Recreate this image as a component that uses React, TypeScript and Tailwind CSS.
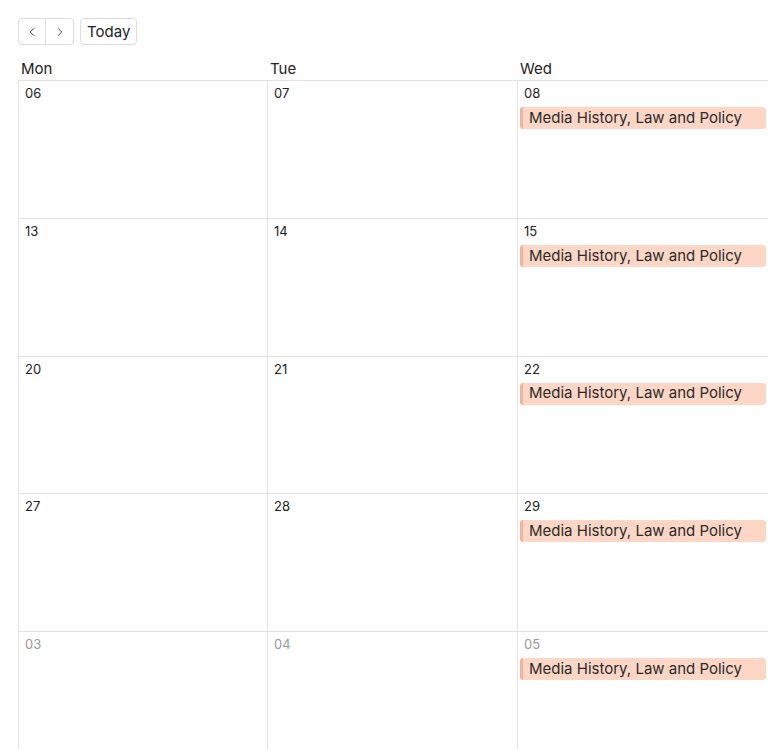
import { ChevronLeft, ChevronRight } from 'lucide-react';

type Day = { label: string; muted?: boolean; event?: string };

const DAYS = ['Mon', 'Tue', 'Wed'];

const WEEKS: Day[][] = [
  [{ label: '06' }, { label: '07' }, { label: '08', event: 'Media History, Law and Policy' }],
  [{ label: '13' }, { label: '14' }, { label: '15', event: 'Media History, Law and Policy' }],
  [{ label: '20' }, { label: '21' }, { label: '22', event: 'Media History, Law and Policy' }],
  [{ label: '27' }, { label: '28' }, { label: '29', event: 'Media History, Law and Policy' }],
  [
    { label: '03', muted: true },
    { label: '04', muted: true },
    { label: '05', muted: true, event: 'Media History, Law and Policy' },
  ],
];

function Toolbar() {
  return (
    <div className="flex items-center gap-[6px]">
      <div className="flex h-[27px] overflow-hidden rounded-[4px] border border-[#dcdcdc]">
        <button
          type="button"
          className="flex w-[26px] items-center justify-center text-[#3a3a3a]"
          aria-label="Previous"
        >
          <ChevronLeft size={14} strokeWidth={1.6} />
        </button>
        <button
          type="button"
          className="flex w-[28px] items-center justify-center border-l border-[#dcdcdc] text-[#3a3a3a]"
          aria-label="Next"
        >
          <ChevronRight size={14} strokeWidth={1.6} />
        </button>
      </div>
      <button
        type="button"
        className="h-[27px] rounded-[4px] border border-[#dcdcdc] px-[6px] text-[15px] leading-[25px] text-[#222]"
      >
        Today
      </button>
    </div>
  );
}

function DayCell({ day }: { day: Day }) {
  return (
    <div className="h-[137.75px] border-b border-l border-[#e2e2e2]">
      <div
        className={`pl-[6px] pt-[3px] text-[13px] leading-[18px] ${day.muted ? 'text-[#999]' : 'text-[#222]'}`}
      >
        {day.label}
      </div>
      {day.event && (
        <div className="mt-[5px] ml-[2px] mr-[2px] flex h-[22px] items-center rounded-[3px] border-l-[3px] border-[#f2b39d] bg-[#fdd6c6] pl-[6px] text-[15px] text-[#2a2a2a]">
          {day.event}
        </div>
      )}
    </div>
  );
}

export default function App() {
  return (
    <div
      className="h-[749px] overflow-hidden bg-white pt-[18px] pl-[18px]"
      style={{ fontFamily: 'Inter, "Liberation Sans", sans-serif' }}
    >
      <Toolbar />
      <div className="mt-[14px] grid w-[750px] grid-cols-[249px_250px_251px]">
        {DAYS.map(d => (
          <div
            key={d}
            className="border-b border-[#e2e2e2] pl-[3px] pb-[1px] text-[15px] leading-[20px] text-[#222]"
          >
            {d}
          </div>
        ))}
        {WEEKS.map((week, wi) =>
          week.map((day, di) => <DayCell key={`${wi}-${di}`} day={day} />)
        )}
      </div>
    </div>
  );
}
